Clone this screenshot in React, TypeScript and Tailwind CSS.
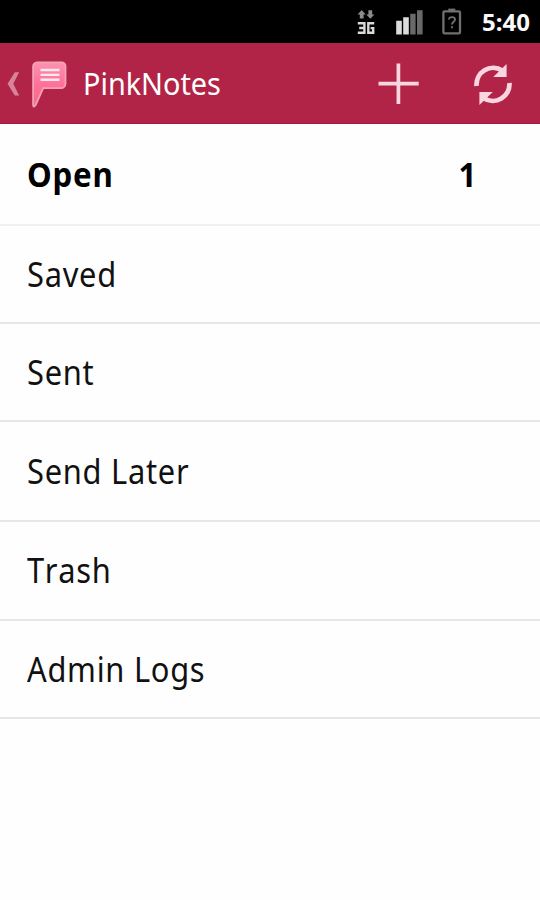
const folders = [
  { name: 'Open', count: 1, height: 'h-[102px]' },
  { name: 'Saved', height: 'h-[98px]' },
  { name: 'Sent', height: 'h-[98px]' },
  { name: 'Send Later', height: 'h-[100px]' },
  { name: 'Trash', height: 'h-[99px]' },
  { name: 'Admin Logs', height: 'h-[98px]' },
]

export default function App() {
  return (
    <div className="flex h-[900px] w-[540px] flex-col overflow-hidden bg-[#fefefe] font-['Noto_Sans','Open_Sans',sans-serif] text-black">
      <StatusBar />
      <ActionBar />
      <main className="flex-1">
        <ul>
          {folders.map((folder) => (
            <FolderRow key={folder.name} {...folder} />
          ))}
        </ul>
      </main>
    </div>
  )
}

function StatusBar() {
  return (
    <div className="flex h-[43px] shrink-0 items-center justify-end bg-black pr-[10px]">
      <svg width="126" height="43" viewBox="0 0 126 43" className="mr-[3px]" aria-hidden="true">
        {/* data arrows */}
        <path d="M4.6 14.4 8.7 10l4.1 4.4h-2.2v4.2H6.8v-4.2zM13.2 14.4h2.2v-4.2h3.8v4.2h2.2l-4.1 4.4z" fill="#8c8c8c" />
        {/* 3G */}
        <path
          d="M4.8 23.3h6.6v9.4H4.8M6.2 28h5M21.2 23.3h-5.9v9.4h4.9v-4.6h-2.6"
          fill="none"
          stroke="#dadada"
          strokeWidth="2.4"
        />
        {/* signal */}
        <path d="M43.2 20.8h5.6v13.7h-5.6zM50.2 17.3h5.6v17.2h-5.6z" fill="#dcdcdc" />
        <path d="M57.2 13.8h5.4v20.7h-5.4zM64 10.2h5.6v24.3H64z" fill="#696969" />
        {/* battery */}
        <rect x="90.4" y="11.4" width="16.6" height="22" rx="1.2" fill="none" stroke="#707070" strokeWidth="2.3" />
        <rect x="95.3" y="8.6" width="7" height="3.2" fill="#707070" />
        <path
          d="M96 19.5c0-3.2 6-3.2 6 0 0 2.4-3 2.2-3 5M99 26.2v2"
          fill="none"
          stroke="#707070"
          strokeWidth="1.9"
        />
      </svg>
      <span className="text-[24px] leading-[43px] font-bold text-[#fafafa]">5:40</span>
    </div>
  )
}

function ActionBar() {
  return (
    <header className="flex h-[81px] shrink-0 items-center border-b border-[#a31a3a] bg-[#b22447]">
      <button type="button" aria-label="Navigate up" className="flex items-center">
        <svg width="83" height="80" viewBox="0 0 83 80" aria-hidden="true">
          <defs>
            <linearGradient id="note" x1="0" y1="0" x2="0" y2="1">
              <stop offset="0" stopColor="#fb93b0" />
              <stop offset=".5" stopColor="#ff719a" />
              <stop offset="1" stopColor="#fb668e" />
            </linearGradient>
          </defs>
          <path d="M14.8 29.2h4.3l-5.8 11.6 5.8 11.8h-4.3L7.6 40.8z" fill="#d5849a" />
          <path
            d="M37 19.3h24.5a4 4 0 0 1 4 4v17.4a4.5 4.5 0 0 1-4.5 4.5H43.2L36 61.3q-2.8 4.8-2.9 0V23.3a4 4 0 0 1 3.9-4z"
            fill="url(#note)"
            stroke="#f3a3b6"
            strokeWidth="1.8"
          />
          <path d="M40.5 27h19M40.5 31.9h19M40.5 36.8h19" stroke="#ffe9ef" strokeWidth="2.4" />
        </svg>
      </button>
      <h1 className="w-[285px] origin-left scale-x-[.93] text-[31px] leading-[80px] whitespace-nowrap text-white">
        PinkNotes
      </h1>
      <button type="button" aria-label="New note">
        <svg width="60" height="80" viewBox="368 43 60 80" aria-hidden="true">
          <path d="M378.5 83.6h40.2M398.4 63.5v40.4" stroke="#f9d6df" strokeWidth="3.7" />
        </svg>
      </button>
      <button type="button" aria-label="Refresh" className="ml-[32px]">
        <svg width="70" height="80" viewBox="460 43 70 80" aria-hidden="true">
          <path
            d="M476.6 86a16.6 16.6 0 0 1 25.6-15.4M509.4 83a16.6 16.6 0 0 1-25.6 15.2"
            fill="none"
            stroke="#f9d6df"
            strokeWidth="4.8"
          />
          <path d="M506.6 64v13h-13.4zM479.4 105V92h13.4z" fill="#f9d6df" />
        </svg>
      </button>
    </header>
  )
}

function FolderRow({ name, count, height }: { name: string; count?: number; height: string }) {
  const unread = count !== undefined
  return (
    <li
      className={`flex items-center justify-between border-b-2 pr-[64px] pl-[26.5px] text-[34px] [font-kerning:none] ${height} ${
        unread ? 'border-[#f0f0f0] font-bold' : 'border-[#e6e6e6] text-[#111]'
      }`}
    >
      <span className={`origin-left tracking-[.8px] whitespace-nowrap ${unread ? 'scale-x-[.92]' : 'scale-x-[.907]'}`}>
        {name}
      </span>
      {unread && <span className="origin-right scale-x-[.92]">{count}</span>}
    </li>
  )
}
